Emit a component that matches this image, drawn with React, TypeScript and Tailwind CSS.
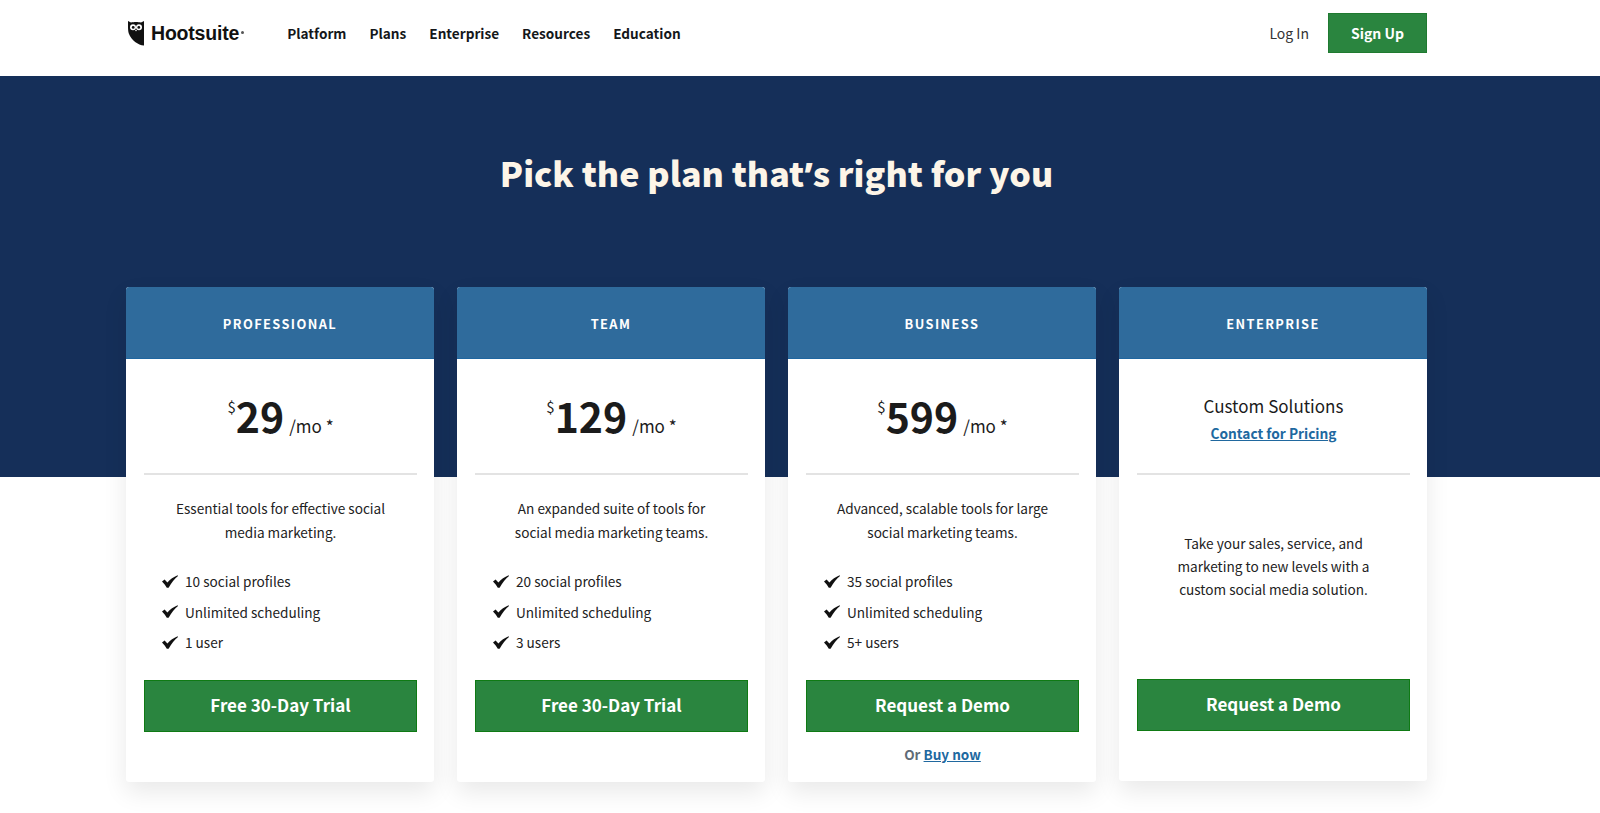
import React from 'react';

const font = { fontFamily: '"Noto Sans CJK SC", "Open Sans", sans-serif' };

interface Plan {
  name: string;
  price?: string;
  blurb: string[];
  features?: string[];
  cta: string;
  buyNow?: boolean;
}

const plans: Plan[] = [
  {
    name: 'PROFESSIONAL',
    price: '29',
    blurb: ['Essential tools for effective social', 'media marketing.'],
    features: ['10 social profiles', 'Unlimited scheduling', '1 user'],
    cta: 'Free 30-Day Trial',
  },
  {
    name: 'TEAM',
    price: '129',
    blurb: ['An expanded suite of tools for', 'social media marketing teams.'],
    features: ['20 social profiles', 'Unlimited scheduling', '3 users'],
    cta: 'Free 30-Day Trial',
  },
  {
    name: 'BUSINESS',
    price: '599',
    blurb: ['Advanced, scalable tools for large', 'social marketing teams.'],
    features: ['35 social profiles', 'Unlimited scheduling', '5+ users'],
    cta: 'Request a Demo',
    buyNow: true,
  },
  {
    name: 'ENTERPRISE',
    blurb: ['Take your sales, service, and', 'marketing to new levels with a', 'custom social media solution.'],
    cta: 'Request a Demo',
  },
];

const navLinks = ['Platform', 'Plans', 'Enterprise', 'Resources', 'Education'];

const Check = () => (
  <svg viewBox="0 0 16 13" className="w-4 h-[13px] shrink-0 text-[#111]" fill="currentColor">
    <path d="M0 6.6 L2.6 4.6 L5.4 7.4 C8 4.4 11.6 1.8 15.6 0.2 L16 1 C12.6 3.8 9.4 7.8 6.6 12.8 L4.8 12.8 C3.6 10.6 2 8.6 0 6.6 Z" />
  </svg>
);

const OwlLogo = () => (
  <svg viewBox="0 0 16 25" className="w-4 h-[25px] shrink-0">
    <path d="M0 0 L3 1.6 C5.5 0.8 10.5 0.8 13 1.6 L16 0 L16 24.5 C10 24 3.5 19.5 0.8 12.5 C0.2 10.5 0 8 0 6 Z" fill="#111" />
    <circle cx="5" cy="6.2" r="3" fill="#fff" />
    <circle cx="11" cy="6.2" r="3" fill="#fff" />
    <circle cx="5.2" cy="6.4" r="1.4" fill="#111" />
    <circle cx="10.8" cy="6.4" r="1.4" fill="#111" />
    <path d="M7 9 L8 10.4 L9 9 Z" fill="#fff" />
  </svg>
);

const PlanCard = ({ plan }: { plan: Plan }) => {
  const custom = !plan.price;
  return (
    <div
      className={`w-[308px] bg-white rounded-[3px] shadow-[0_10px_24px_rgba(0,0,0,0.09)] flex flex-col ${custom ? 'h-[494px]' : 'h-[495px]'}`}
    >
      <div className="h-[72px] pt-[2px] bg-[#2f6b9c] border-b border-[#1f66a0] rounded-t-[3px] flex items-center justify-center text-white text-[12.8px] leading-5 font-bold tracking-[0.11em]">
        {plan.name}
      </div>
      <div className="pl-[18px] pr-[17px] flex-1 flex flex-col">
        <div className="h-[116px] border-b-2 border-[#e3e3e3] shrink-0">
          {custom ? (
            <div className="pt-[35px] text-center">
              <div className="text-[17px] leading-6 text-[#1b1b1b]">Custom Solutions</div>
              <a className="block mt-[5px] text-[13.7px] leading-5 font-bold text-[#20689f] underline">
                Contact for Pricing
              </a>
            </div>
          ) : (
            <div className="pt-[26px] flex justify-center items-start text-[#1b1b1b]">
              <span className="text-[15px] leading-5 mt-[12px]">$</span>
              <span className="text-[41px] leading-[60px] font-bold">{plan.price}</span>
              <span className="text-[17px] leading-6 ml-[5px] mt-[29px]">/mo *</span>
            </div>
          )}
        </div>
        {custom ? (
          <div className="mt-[57px] text-center text-[13.6px] leading-[23px] text-[#222]">
            {plan.blurb.map((line) => (
              <div key={line}>{line}</div>
            ))}
          </div>
        ) : (
          <>
            <div className="mt-[21px] text-center text-[13.6px] leading-[24px] text-[#222]">
              {plan.blurb.map((line) => (
                <div key={line}>{line}</div>
              ))}
            </div>
            <ul className="mt-[27px] pl-[18px] flex flex-col gap-[10.5px]">
              {plan.features?.map((f) => (
                <li key={f} className="flex items-center gap-[7px] text-[13.6px] leading-5 text-[#222]">
                  <Check />
                  {f}
                </li>
              ))}
            </ul>
          </>
        )}
        <div className={custom ? 'mt-[78px]' : 'mt-[28px]'}>
          <a className="h-[52px] pb-[2px] bg-[#2a853f] border border-[#0f7a14] flex items-center justify-center text-white text-[17px] leading-6 font-bold">
            {plan.cta}
          </a>
          {plan.buyNow && (
            <div className="mt-[12px] text-center text-[13.5px] leading-5 font-bold text-[#5f6b76]">
              Or <a className="text-[#20689f] underline">Buy now</a>
            </div>
          )}
        </div>
      </div>
    </div>
  );
};

export default function App() {
  return (
    <div className="w-[1600px] h-[813px] overflow-hidden bg-white" style={font}>
      <header className="h-[76px] flex items-center pl-[128px] pr-[173px] pb-[10px]">
        <div className="flex items-center gap-[7px]">
          <OwlLogo />
          <span className="text-[19.5px] leading-6 font-bold text-[#111] tracking-[-0.01em]" style={{ fontFamily: '"Liberation Sans", sans-serif' }}>
            Hootsuite
          </span>
          <span className="w-[3px] h-[3px] -ml-[5px] -mt-[1px] rounded-full bg-[#555]" />
        </div>
        <nav className="ml-[43px] flex items-center gap-[23px] text-[13.6px] leading-5 font-bold text-[#14171a]">
          {navLinks.map((l) => (
            <a key={l}>{l}</a>
          ))}
        </nav>
        <a className="ml-auto text-[14px] leading-5 text-[#333]">Log In</a>
        <a className="ml-[19px] w-[99px] h-[40px] bg-[#2a853f] border border-[#1f7a30] flex items-center justify-center text-white text-[14px] leading-5 font-bold">
          Sign Up
        </a>
      </header>
      <section className="h-[401px] bg-[#152f59] pt-[70px] pr-[47px]">
        <h1 className="text-center text-[34px] leading-[54px] font-black text-[#fdf5e8]">
          Pick the plan that<span style={{ fontFamily: '"Open Sans", sans-serif' }}>’</span>s right for you
        </h1>
      </section>
      <div className="-mt-[190px] pl-[126px] flex items-start gap-[23px] relative">
        {plans.map((p) => (
          <PlanCard key={p.name} plan={p} />
        ))}
      </div>
    </div>
  );
}
